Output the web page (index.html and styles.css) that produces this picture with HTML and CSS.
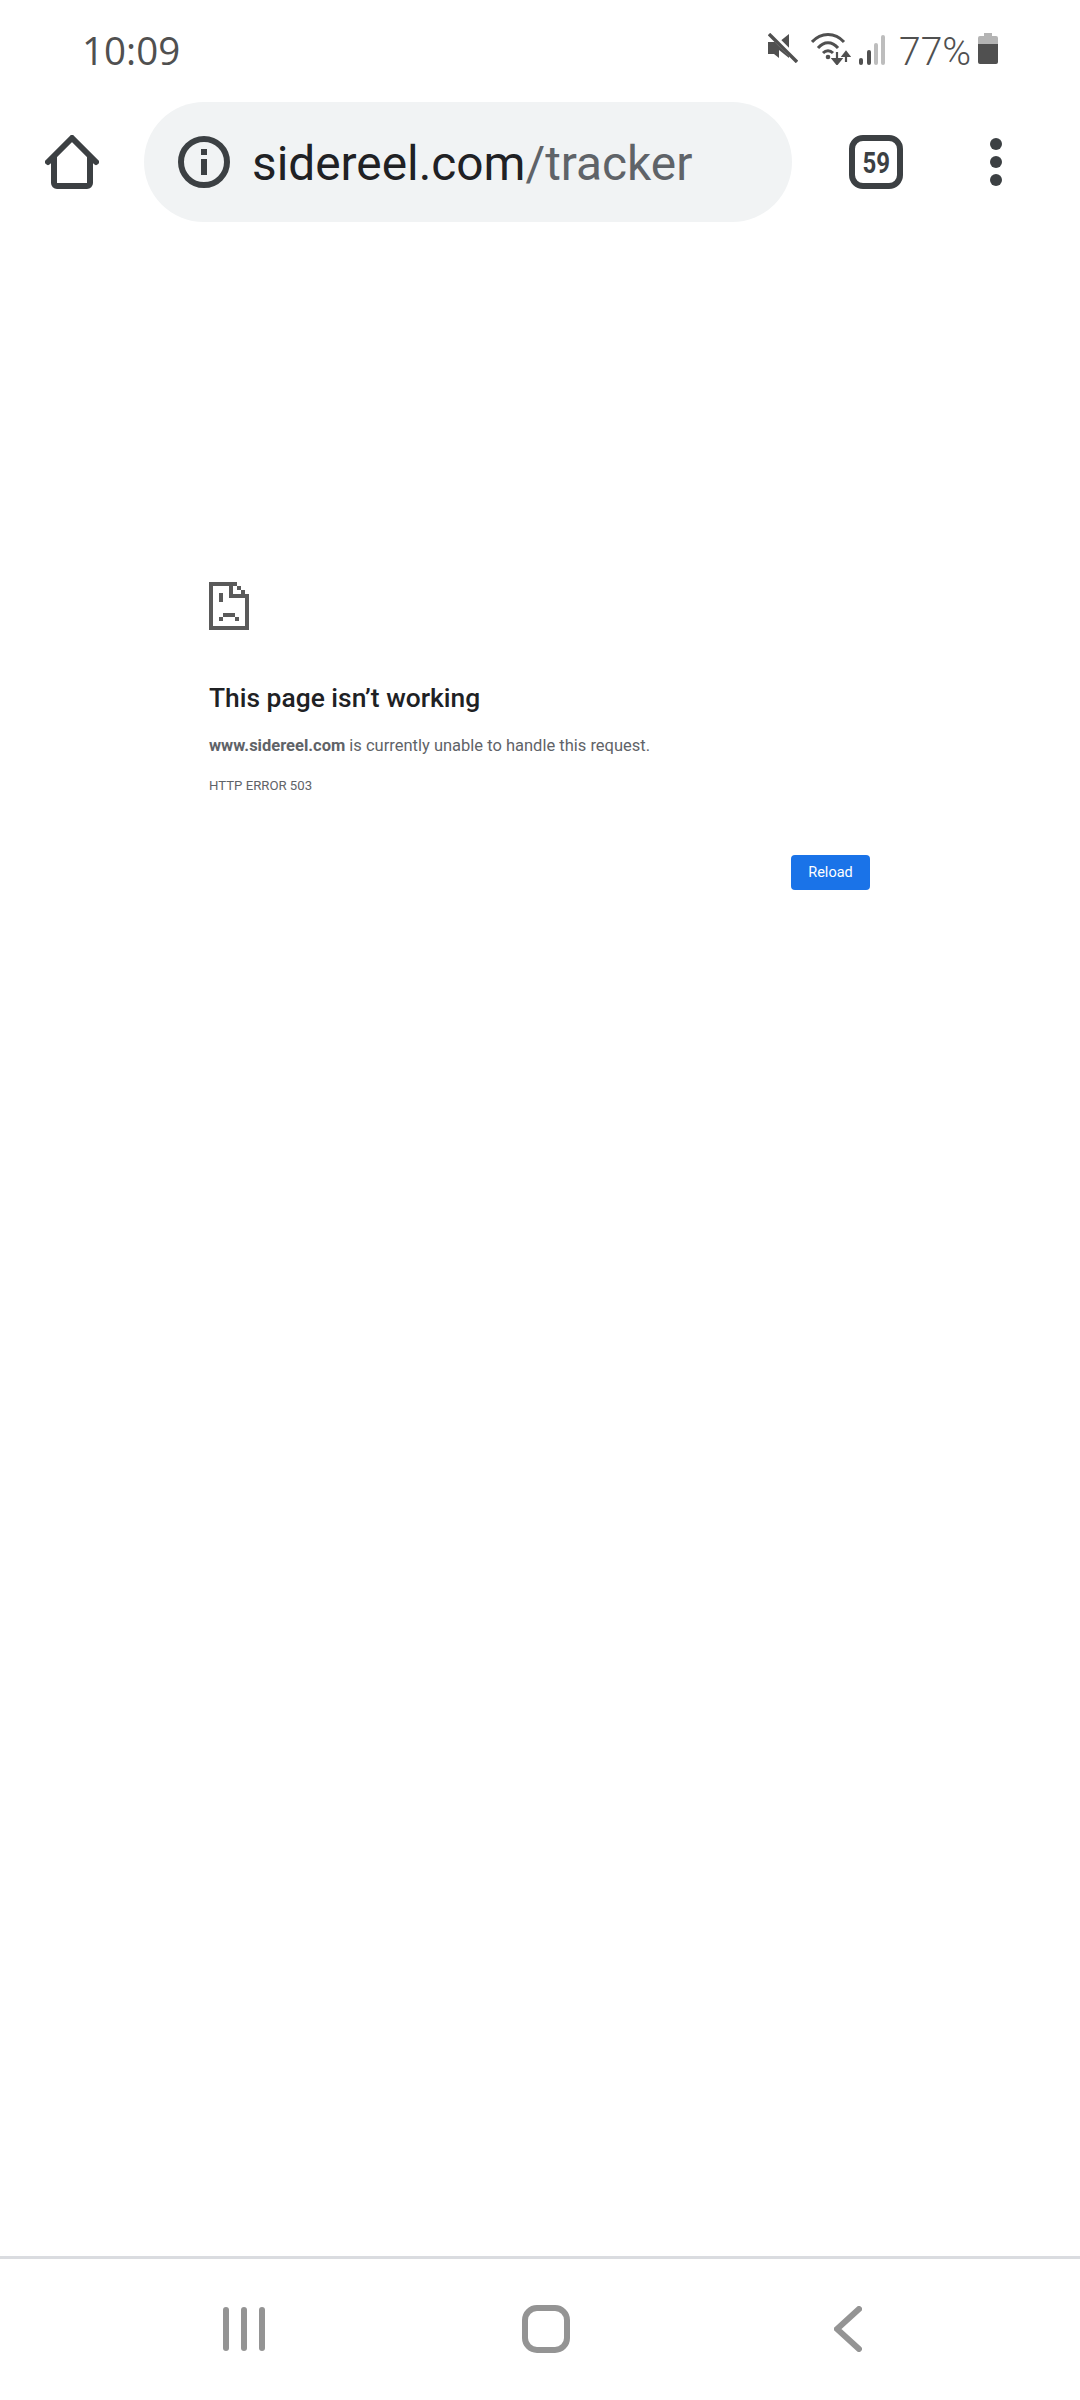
FILE: index.html
```html
<!DOCTYPE html>
<html>
<head>
	<meta charset="UTF-8">
	<title>sidereel.com/tracker</title>
	<link rel="stylesheet" href="styles.css">
</head>
<body>
	<div class="status-bar">
		<span class="clock">10:09</span>
		<div class="status-icons">
			<svg class="icon-mute" width="30" height="30" viewBox="0 0 30 30">
				<path d="M0 9h6l5-4v20l-5-4H0z" fill="#505050"/>
				<path d="M21 1v24l-10-8V9z" fill="#505050"/>
				<path d="M0 -2L32 30" stroke="#fff" stroke-width="6" fill="none"/>
				<path d="M1 1L29 29" stroke="#505050" stroke-width="3.4" fill="none"/>
			</svg>
			<svg class="icon-wifi" width="40" height="32" viewBox="0 0 40 32">
				<path d="M1 9C10 -1 24 -1 33 9" stroke="#505050" stroke-width="3" fill="none"/>
				<path d="M7 15C13 8 21 8 27 15" stroke="#505050" stroke-width="3" fill="none"/>
				<path d="M12 20C15 17 19 17 22 20" stroke="#505050" stroke-width="3" fill="none"/>
				<circle cx="17" cy="24" r="2.3" fill="#505050"/>
				<path d="M26 19v11M22 26l4 5 4-5z" stroke="#505050" stroke-width="2.2" fill="#505050"/>
				<path d="M35 29V19M32 23l3-4 3 4z" stroke="#505050" stroke-width="2.2" fill="#505050"/>
			</svg>
			<svg class="icon-signal" width="27" height="30" viewBox="0 0 27 30">
				<rect x="0" y="23" width="4" height="7" rx="2" fill="#505050"/>
				<rect x="8" y="15" width="4" height="15" rx="2" fill="#505050"/>
				<rect x="15" y="8" width="4" height="22" rx="2" fill="#bdbdbd"/>
				<rect x="22" y="0" width="4" height="30" rx="2" fill="#bdbdbd"/>
			</svg>
			<span class="battery-level">77%</span>
			<svg class="icon-battery" width="20" height="31" viewBox="0 0 20 31">
				<path d="M6 0h8v3h4a2 2 0 0 1 2 2v6H0V5a2 2 0 0 1 2-2h4z" fill="#b4b4b4"/>
				<path d="M0 11h20v18a2 2 0 0 1-2 2H2a2 2 0 0 1-2-2z" fill="#505050"/>
			</svg>
		</div>
	</div>

	<div class="toolbar">
		<svg class="icon-home" width="54" height="54" viewBox="0 0 54 54">
			<path d="M3 27L27 3l24 24" stroke="#3c4043" stroke-width="6" stroke-linecap="round" stroke-linejoin="round" fill="none"/>
			<path d="M9 22v26a3 3 0 0 0 3 3h30a3 3 0 0 0 3-3V22" stroke="#3c4043" stroke-width="6" fill="none"/>
		</svg>
		<div class="omnibox">
			<svg class="icon-info" width="52" height="52" viewBox="0 0 52 52">
				<circle cx="26" cy="26" r="23" stroke="#3c4043" stroke-width="6" fill="none"/>
				<rect x="23" y="13" width="6" height="6" fill="#3c4043"/>
				<rect x="23" y="23" width="6" height="16" fill="#3c4043"/>
			</svg>
			<span class="url">sidereel.com<span class="url-path">/tracker</span></span>
		</div>
		<div class="tab-count"><span class="tab-digits">59</span></div>
		<div class="menu-dots">
			<span></span>
			<span></span>
			<span></span>
		</div>
	</div>

	<div class="error-page">
		<svg class="icon-sad" width="40" height="48" viewBox="0 0 40 48" shape-rendering="crispEdges">
			<path d="M0 0h24v12h16v36H0zM4 4v40h32V16H20V4z" fill="#5a5a5a"/>
			<path d="M24 0h4v4h-4zM28 4h4v4h-4zM32 8h4v4h-4zM36 12h4v4h-4z" fill="#5a5a5a"/>
			<rect x="10" y="11" width="4" height="9" fill="#5a5a5a"/>
			<rect x="14" y="31" width="12" height="4" fill="#5a5a5a"/>
			<rect x="10" y="35" width="4" height="4" fill="#5a5a5a"/>
			<rect x="26" y="35" width="4" height="4" fill="#5a5a5a"/>
		</svg>
		<h1>This page isn’t working</h1>
		<p class="summary"><strong>www.sidereel.com</strong> is currently unable to handle this request.</p>
		<p class="error-code">HTTP ERROR 503</p>
		<div class="actions">
			<button type="button">Reload</button>
		</div>
	</div>

	<div class="nav-bar">
		<div class="nav-recents">
			<span></span>
			<span></span>
			<span></span>
		</div>
		<div class="nav-home"></div>
		<svg class="nav-back" width="28" height="46" viewBox="0 0 28 46">
			<path d="M25 3L3 23l22 20" stroke="#949494" stroke-width="6" stroke-linecap="round" fill="none"/>
		</svg>
	</div>
</body>
</html>
```

FILE: styles.css
```css
html, body {
	margin: 0;
	padding: 0;
	background-color: #ffffff;
}

body {
	width: 1080px;
	height: 2400px;
	display: flex;
	flex-direction: column;
	font-family: Roboto, "Liberation Sans", sans-serif;
}

.status-bar {
	height: 102px;
	box-sizing: border-box;
	padding: 0 82px 0 82px;
	display: flex;
	justify-content: space-between;
	align-items: flex-start;
	color: #505050;
}

.clock {
	margin-top: 25px;
	font-family: "Open Sans", sans-serif;
	font-size: 38.5px;
	line-height: 50px;
}

.status-icons {
	display: flex;
	align-items: flex-start;
	margin-top: 33px;
}

.icon-wifi {
	margin-left: 13px;
}

.icon-signal {
	margin-left: 8px;
	margin-top: 2px;
}

.battery-level {
	width: 71px;
	margin-left: 13px;
	padding-top: 2px;
	font-size: 39px;
	font-weight: 300;
	line-height: 34px;
	white-space: nowrap;
}

.icon-battery {
	margin-left: 8px;
}

.toolbar {
	height: 120px;
	display: flex;
	align-items: center;
	padding-left: 45px;
}

.omnibox {
	width: 648px;
	height: 120px;
	margin-left: 45px;
	border-radius: 60px;
	background-color: #f1f3f4;
	display: flex;
	align-items: center;
	padding-left: 34px;
	box-sizing: border-box;
}

.url {
	margin-left: 22px;
	padding-top: 4px;
	font-size: 47.8px;
	color: #202124;
}

.url-path {
	color: #5f6368;
}

.tab-count {
	width: 54px;
	height: 54px;
	margin-left: 57px;
	box-sizing: border-box;
	border: 6px solid #3c4043;
	border-radius: 14px;
	display: flex;
	align-items: center;
	justify-content: center;
	font-size: 30px;
	font-weight: bold;
	color: #3c4043;
}

.tab-digits {
	transform: scaleX(0.8);
}

.menu-dots {
	margin-left: 87px;
	display: flex;
	flex-direction: column;
	gap: 6px;
}

.menu-dots span {
	width: 12px;
	height: 12px;
	border-radius: 50%;
	background-color: #3c4043;
}

.error-page {
	flex: 1;
	box-sizing: border-box;
	width: 870px;
	padding: 360px 0 0 209px;
}

.icon-sad {
	display: block;
}

h1 {
	margin: 50px 0 0 0;
	font-size: 26.4px;
	line-height: 36px;
	font-weight: 500;
	color: #202124;
}

.summary {
	margin: 18px 0 0 0;
	font-size: 16.5px;
	line-height: 24px;
	color: #5f6368;
}

.error-code {
	margin: 19px 0 0 0;
	font-size: 13.2px;
	line-height: 18px;
	color: #5f6368;
}

.actions {
	margin-top: 60px;
	display: flex;
	justify-content: flex-end;
}

button {
	width: 79px;
	height: 35px;
	padding: 0;
	border: none;
	border-radius: 4px;
	background-color: #1a73e8;
	color: #ffffff;
	font-family: Roboto, sans-serif;
	font-size: 14.5px;
}

.nav-bar {
	height: 144px;
	box-sizing: border-box;
	border-top: 3px solid #dadce0;
	display: flex;
	align-items: flex-start;
}

.nav-recents {
	margin: 48px 0 0 223px;
	display: flex;
	gap: 12px;
}

.nav-recents span {
	width: 6px;
	height: 44px;
	border-radius: 3px;
	background-color: #949494;
}

.nav-home {
	width: 48px;
	height: 48px;
	margin: 46px 0 0 257px;
	box-sizing: border-box;
	border: 6px solid #949494;
	border-radius: 15px;
}

.nav-back {
	margin: 47px 0 0 264px;
}
```
